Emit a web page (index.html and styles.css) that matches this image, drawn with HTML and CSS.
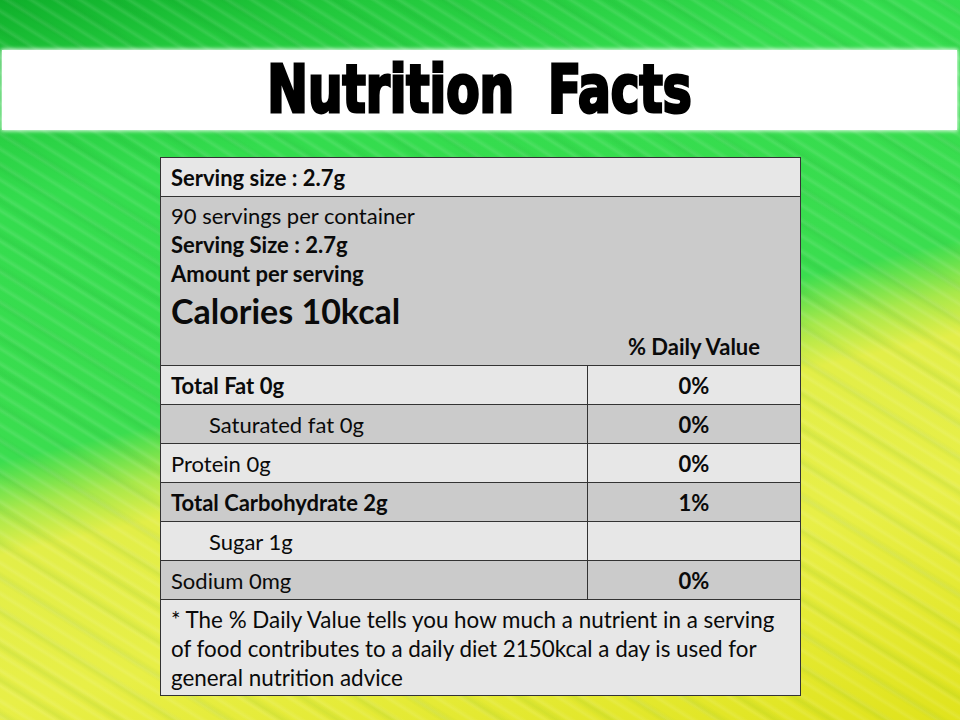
FILE: index.html
```html
<!DOCTYPE html>
<html>
<head>
<meta charset="utf-8">
<link rel="stylesheet" href="styles.css">
</head>
<body>
<div class="page">
  <header class="banner">
    <h1 class="title">Nutrition&nbsp;&nbsp;Facts</h1>
  </header>
  <section class="label">
    <div class="cell full light bold">Serving size : 2.7g</div>
    <div class="cell full dark summary">
      <div class="line">90 servings per container</div>
      <div class="line bold">Serving Size : 2.7g</div>
      <div class="line bold">Amount per serving</div>
      <div class="calories bold">Calories 10kcal</div>
      <div class="dv-row"><span class="dv bold">% Daily Value</span></div>
    </div>
    <div class="cell name light bold">Total Fat 0g</div>
    <div class="cell pct light bold">0%</div>
    <div class="cell name dark indent">Saturated fat 0g</div>
    <div class="cell pct dark bold">0%</div>
    <div class="cell name light">Protein 0g</div>
    <div class="cell pct light bold">0%</div>
    <div class="cell name dark bold">Total Carbohydrate 2g</div>
    <div class="cell pct dark bold">1%</div>
    <div class="cell name light indent">Sugar 1g</div>
    <div class="cell pct light"></div>
    <div class="cell name dark">Sodium 0mg</div>
    <div class="cell pct dark bold">0%</div>
    <div class="cell full light note">* The % Daily Value tells you how much a nutrient in a serving<br>of food contributes to a daily diet 2150kcal a day is used for<br>general nutrition advice</div>
  </section>
</div>
</body>
</html>
```
FILE: styles.css
```css
html, body {
  margin: 0;
  padding: 0;
}
body {
  width: 960px;
  height: 720px;
  overflow: hidden;
  font-family: Lato, "Open Sans", sans-serif;
  color: #0a0a0a;
  background:
    repeating-linear-gradient(32deg, rgba(255,255,255,0) 0px, rgba(255,255,255,0.10) 3px, rgba(255,255,255,0) 7px, rgba(0,0,0,0) 13px),
    repeating-linear-gradient(32deg, rgba(0,120,20,0) 0px, rgba(0,120,20,0.07) 5px, rgba(0,120,20,0) 11px, rgba(0,0,0,0) 29px),
    linear-gradient(167deg, #0fb02b 0%, #22c83c 9%, #34dc4e 22%, #3bdd4f 49%, #a8e84a 54.5%, #e2ee48 59%, #e8ef47 75%, #e0e31c 100%);
}
.page {
  padding-top: 50px;
}
.banner {
  margin: 0 3px 0 2px;
  height: 80px;
  background: #fff;
  box-shadow: 0 0 4px 1px rgba(255,255,255,0.9);
  display: flex;
  align-items: center;
  justify-content: center;
}
.title {
  margin: 0;
  font-family: "Liberation Sans Narrow", "DejaVu Sans Condensed", sans-serif;
  font-weight: 700;
  font-size: 54px;
  line-height: 1;
  color: #000;
  -webkit-text-stroke: 2.4px #000;
  transform: scaleY(1.22);
}
.label {
  margin: 27px 0 0 160px;
  width: 639px;
  border: 1px solid #333;
  display: grid;
  grid-template-columns: 427px 1fr;
}
.cell {
  box-sizing: border-box;
  height: 39px;
  border-bottom: 1px solid #333;
  padding: 0 10px;
  display: flex;
  align-items: center;
  font-size: 22px;
}
.full { grid-column: 1 / 3; }
.name { border-right: 1px solid #333; }
.pct { justify-content: center; }
.light { background: #e7e7e7; }
.dark { background: #cbcbcb; }
.bold { font-weight: 700; }
.indent { padding-left: 48px; }
.summary {
  height: 169px;
  display: block;
  padding-top: 4px;
}
.line {
  line-height: 29px;
}
.calories {
  font-size: 34px;
  line-height: 46px;
}
.dv-row {
  display: flex;
  justify-content: flex-end;
}
.dv {
  width: 212px;
  margin-right: -10px;
  text-align: center;
  line-height: 26px;
}
.note {
  height: 95px;
  border-bottom: none;
  display: block;
  padding-top: 5px;
  font-size: 22.4px;
  line-height: 29px;
}
```
